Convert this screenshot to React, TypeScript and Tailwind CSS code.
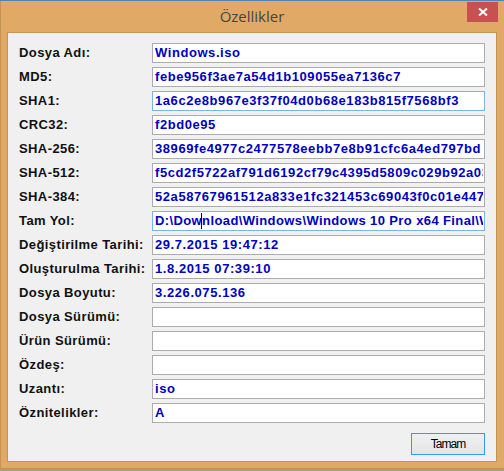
const rows: [string, string, boolean?][] = [
  ["Dosya Adı:", "Windows.iso"],
  ["MD5:", "febe956f3ae7a54d1b109055ea7136c7"],
  ["SHA1:", "1a6c2e8b967e3f37f04d0b68e183b815f7568bf3", true],
  ["CRC32:", "f2bd0e95"],
  ["SHA-256:", "38969fe4977c2477578eebb7e8b91cfc6a4ed797bd"],
  ["SHA-512:", "f5cd2f5722af791d6192cf79c4395d5809c029b92a03"],
  ["SHA-384:", "52a58767961512a833e1fc321453c69043f0c01e4475"],
  ["Tam Yol:", "D:\\Download\\Windows\\Windows 10 Pro x64 Final\\W", true],
  ["Değiştirilme Tarihi:", "29.7.2015 19:47:12"],
  ["Oluşturulma Tarihi:", "1.8.2015 07:39:10"],
  ["Dosya Boyutu:", "3.226.075.136"],
  ["Dosya Sürümü:", ""],
  ["Ürün Sürümü:", ""],
  ["Özdeş:", ""],
  ["Uzantı:", "iso"],
  ["Öznitelikler:", "A"],
];

export default function App() {
  return (
    <div className="w-[504px] h-[471px] flex flex-col overflow-hidden bg-[#8fa79a] font-['Liberation_Sans',sans-serif]">
      <div className="h-px bg-[#4f86b0]" />
      <div className="h-[468px] flex flex-col bg-[#e0aa66] border-b border-[#c39358] border-l">
        <div className="h-[31px] flex items-center justify-center relative">
          <span className="text-[15px] text-[#444444] font-['Open_Sans',sans-serif] -ml-px">Özellikler</span>
          <div className="absolute right-[6px] top-px w-[31px] h-[20px] bg-[#c75050] flex items-center justify-center">
            <svg width="10" height="10" viewBox="0 0 10 10">
              <path d="M1 1.5L9 8.5M9 1.5L1 8.5" stroke="#fff" strokeWidth="2" />
            </svg>
          </div>
        </div>
        <div className="ml-[6px] mr-[7px] h-[430px] border border-[#c39358] bg-[#f0f0f0] pt-[10px] pl-[11px] pr-[11px] flex flex-col">
          <div className="flex flex-col gap-1">
            {rows.map(([label, value, focused]) => (
              <div key={label} className="flex items-center h-5">
                <span className="w-[133px] text-[13px] font-bold tracking-[0.4px] text-[#111111] whitespace-nowrap">{label}</span>
                <div className={`relative flex-1 h-5 min-w-0 bg-white border flex items-center pl-[2px] pr-px ${focused ? "border-[#7db4e8]" : "border-[#acacb0]"}`}>
                  <div className="overflow-hidden w-full">
                    <div className={`text-[13px] font-bold text-[#0000c0] whitespace-nowrap ${label === "Tam Yol:" ? "tracking-[0.39px]" : "tracking-[0.57px]"}`}>{value}</div>
                  </div>
                  {label === "Tam Yol:" && <div className="absolute left-[48px] top-[1px] w-px h-4 bg-black" />}
                </div>
              </div>
            ))}
          </div>
          <div className="flex justify-end mt-[10px]">
            <button className="w-[74px] h-[22px] border border-[#3399ff] bg-gradient-to-b from-[#f0f0f0] to-[#e5e5e5] text-[12px] tracking-[-1px] text-black flex items-center justify-center">Tamam</button>
          </div>
        </div>
      </div>
      <div className="flex-1" />
    </div>
  );
}
